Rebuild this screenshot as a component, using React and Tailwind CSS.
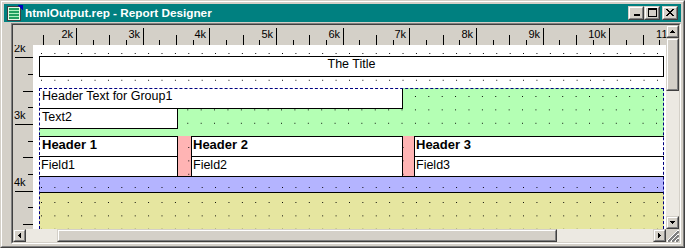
import React from "react";

function Pix({ rows, color = "#000" }) {
  const h = rows.length;
  const w = rows[0].length;
  const rects = [];
  rows.forEach((r, y) => {
    for (let x = 0; x < r.length; x++) {
      if (r[x] === "x") rects.push(<rect key={`${x}-${y}`} x={x} y={y} width="1" height="1" fill={color} />);
    }
  });
  return (
    <svg width={w} height={h} viewBox={`0 0 ${w} ${h}`} shapeRendering="crispEdges" className="block">
      {rects}
    </svg>
  );
}

function Bevel({ className, children }) {
  return (
    <div className={`border border-t-[#d4d0c8] border-l-[#d4d0c8] border-r-[#404040] border-b-[#404040] ${className}`}>
      <div className="w-full h-full border border-t-white border-l-white border-r-[#808080] border-b-[#808080] bg-[#d4d0c8] flex items-center justify-center">
        {children}
      </div>
    </div>
  );
}

function AppIcon() {
  return (
    <svg width="16" height="16" viewBox="0 0 16 16" shapeRendering="crispEdges" className="block">
      <rect x="0.5" y="1.5" width="13" height="14" fill="#e8f8e8" stroke="#404040" />
      <rect x="2" y="3" width="10" height="2" fill="#20a060" />
      <rect x="2" y="6" width="10" height="2" fill="#20a060" />
      <rect x="2" y="9" width="10" height="2" fill="#20a060" />
      <rect x="2" y="12" width="10" height="2" fill="#20a060" />
      <rect x="2" y="5" width="10" height="1" fill="#b0f0c0" />
      <rect x="2" y="8" width="10" height="1" fill="#b0f0c0" />
      <rect x="2" y="11" width="10" height="1" fill="#b0f0c0" />
      <polygon points="10,0 16,0 16,6" fill="#0000c0" />
    </svg>
  );
}

function HRuler() {
  const items = [];
  for (let k = -2; k < 40; k++) {
    const x = 43 + k * 16.667;
    if (x < 0 || x > 633) continue;
    const xi = Math.round(x) + 0.5;
    const t = ((k % 4) + 4) % 4;
    const y1 = t === 0 ? 3 : t === 2 ? 10 : 15;
    items.push(<line key={"t" + k} x1={xi} x2={xi} y1={y1} y2={20} stroke="#000" strokeWidth="1" />);
  }
  const labels = [];
  for (let j = 0; j < 10; j++) {
    const x = Math.round(43 + j * 66.667) - 3;
    labels.push(
      <text key={"l" + j} x={x} y={13} textAnchor="end" fontSize="11" fontFamily="'Liberation Sans', Arial, sans-serif" fill="#000">
        {`${j + 2}k`}
      </text>
    );
  }
  return (
    <svg width="633" height="20" viewBox="0 0 633 20" className="block">
      {items}
      {labels}
    </svg>
  );
}

function VRuler() {
  const items = [];
  for (let k = 0; k < 12; k++) {
    const y = 12.33 + k * 16.667;
    if (y > 184) continue;
    const yi = Math.round(y) + 0.5;
    const t = k % 4;
    const x1 = t === 0 ? 2 : t === 2 ? 10 : 15;
    items.push(<line key={"t" + k} x1={x1} x2={20} y1={yi} y2={yi} stroke="#000" strokeWidth="1" />);
  }
  const labels = [];
  for (let m = 0; m < 3; m++) {
    const y = Math.round(12.33 + m * 66.667) - 5;
    labels.push(
      <text key={"l" + m} x={1} y={y} fontSize="11" fontFamily="'Liberation Sans', Arial, sans-serif" fill="#000">
        {`${m + 2}k`}
      </text>
    );
  }
  return (
    <svg width="20" height="184" viewBox="0 0 20 184" className="block">
      {items}
      {labels}
    </svg>
  );
}

function SizeGrip() {
  return (
    <svg width="13" height="13" viewBox="0 0 13 13" className="block" shapeRendering="crispEdges">
      <line x1="12.5" y1="1" x2="1" y2="12.5" stroke="#ffffff" />
      <line x1="12.5" y1="2" x2="2" y2="12.5" stroke="#808080" />
      <line x1="12.5" y1="3" x2="3" y2="12.5" stroke="#808080" />
      <line x1="12.5" y1="5" x2="5" y2="12.5" stroke="#ffffff" />
      <line x1="12.5" y1="6" x2="6" y2="12.5" stroke="#808080" />
      <line x1="12.5" y1="7" x2="7" y2="12.5" stroke="#808080" />
      <line x1="12.5" y1="9" x2="9" y2="12.5" stroke="#ffffff" />
      <line x1="12.5" y1="10" x2="10" y2="12.5" stroke="#808080" />
      <line x1="12.5" y1="11" x2="11" y2="12.5" stroke="#808080" />
    </svg>
  );
}

const UP = ["..x..", ".xxx.", "xxxxx"];
const DOWN = ["xxxxx", ".xxx.", "..x.."];
const LEFT = ["..x", ".xx", "xxx", ".xx", "..x"];
const RIGHT = ["x..", "xx.", "xxx", "xx.", "x.."];
const MIN = ["xxxxxx", "xxxxxx"];
const MAX = ["xxxxxxxxx", "xxxxxxxxx", "x.......x", "x.......x", "x.......x", "x.......x", "x.......x", "x.......x", "xxxxxxxxx"];
const CLOSE = ["xx....xx", ".xx..xx.", "..xxxx..", "...xx...", "..xxxx..", ".xx..xx.", "xx....xx"];

export default function App() {
  return (
    <div className="w-[685px] h-[248px] overflow-hidden border border-t-[#d4d0c8] border-l-[#d4d0c8] border-r-[#404040] border-b-[#404040] bg-[#d4d0c8] font-['Liberation_Sans',Arial,sans-serif] text-black">
      <div className="w-full h-full border border-t-white border-l-white border-r-[#808080] border-b-[#808080] p-[2px] flex flex-col">
        {/* Title bar */}
        <div className="h-[18px] shrink-0 bg-[#008080] flex items-center pl-[3px] pr-[3px]">
          <AppIcon />
          <span className="ml-[2px] text-white font-bold text-[11.75px] leading-none whitespace-nowrap">htmlOutput.rep - Report Designer</span>
          <div className="ml-auto flex">
            <Bevel className="w-[16px] h-[14px]">
              <div className="w-full h-full flex items-end pl-[4px] pb-[2px]">
                <Pix rows={MIN} />
              </div>
            </Bevel>
            <Bevel className="w-[16px] h-[14px]">
              <div className="w-full h-full flex items-start pl-[2px]">
                <Pix rows={MAX} />
              </div>
            </Bevel>
            <Bevel className="w-[16px] h-[14px] ml-[2px]">
              <div className="w-full h-full flex items-start pl-[2px] pt-[1px]">
                <Pix rows={CLOSE} />
              </div>
            </Bevel>
          </div>
        </div>

        {/* Client area */}
        <div className="mt-px ml-[7px] h-[221px] border border-t-[#808080] border-l-[#808080] border-r-white border-b-white">
          <div className="w-full h-full border border-t-[#404040] border-l-[#404040] border-r-[#d4d0c8] border-b-[#d4d0c8] grid grid-cols-[20px_633px_13px] grid-rows-[20px_184px_13px]">
            {/* corner */}
            <div className="bg-[#d4d0c8]" />
            {/* horizontal ruler */}
            <div className="bg-[#d4d0c8] overflow-hidden">
              <HRuler />
            </div>
            {/* vertical scrollbar */}
            <div className="row-span-2 flex flex-col bg-[#ece9e2]">
              <Bevel className="w-[13px] h-[13px] shrink-0">
                <Pix rows={UP} />
              </Bevel>
              <Bevel className="w-[13px] h-[53px] shrink-0" />
              <div className="flex-1" />
              <Bevel className="w-[13px] h-[13px] shrink-0">
                <Pix rows={DOWN} />
              </Bevel>
            </div>
            {/* vertical ruler */}
            <div className="bg-[#d4d0c8] overflow-hidden">
              <VRuler />
            </div>
            {/* canvas */}
            <div className="bg-white overflow-hidden pl-[6px] flex flex-col">
              <div className="w-[625px] h-full flex flex-col">
                {/* page header */}
                <div className="h-[43px] shrink-0 pt-[11px] bg-black [background-image:linear-gradient(to_right,transparent_1px,#ffffff_1px),linear-gradient(to_bottom,transparent_1px,#ffffff_1px)] [background-size:13.4px_13.4px] [background-position:2px_8px]">
                  <div className="h-[21px] border border-black bg-white flex justify-center text-[12.5px] leading-[14px]">The Title</div>
                </div>
                {/* group */}
                <div className="relative flex-1 flex flex-col">
                  <div className="h-[48px] shrink-0 bg-black [background-image:linear-gradient(to_right,transparent_1px,#b4ffb4_1px),linear-gradient(to_bottom,transparent_1px,#b4ffb4_1px)] [background-size:13.4px_13.4px] [background-position:1px_8px]">
                    <div className="w-[364px] h-[21px] border-r border-b border-black bg-white pl-[3px] pt-px text-[12.5px] leading-[14px] whitespace-nowrap">Header Text for Group1</div>
                    <div className="w-[139px] h-[20px] border-r border-b border-black bg-white pl-[3px] pt-px text-[12.5px] leading-[14px]">Text2</div>
                  </div>
                  <div className="h-[40px] shrink-0 flex bg-black [background-image:linear-gradient(to_right,transparent_1px,#ffb4b4_1px),linear-gradient(to_bottom,transparent_1px,#ffb4b4_1px)] [background-size:13.4px_13.4px] [background-position:2px_11px]">
                    <div className="w-[139px] flex flex-col">
                      <div className="h-[21px] border-y border-r border-black bg-white pl-[3px] font-bold text-[13px] leading-[15px]">Header 1</div>
                      <div className="h-[19px] border-r border-black bg-white pl-[2px] pt-px text-[12.5px] leading-[14px]">Field1</div>
                    </div>
                    <div className="w-[13px]" />
                    <div className="w-[212px] flex flex-col">
                      <div className="h-[21px] border border-black bg-white pl-px font-bold text-[13px] leading-[15px]">Header 2</div>
                      <div className="h-[19px] border-x border-black bg-white pl-px pt-px text-[12.5px] leading-[14px]">Field2</div>
                    </div>
                    <div className="w-[11px]" />
                    <div className="flex-1 flex flex-col">
                      <div className="h-[21px] border-y border-l border-black bg-white pl-px font-bold text-[13px] leading-[15px]">Header 3</div>
                      <div className="h-[19px] border-l border-black bg-white pl-px pt-px text-[12.5px] leading-[14px]">Field3</div>
                    </div>
                  </div>
                  <div className="h-[17px] shrink-0 border-y border-black bg-black [background-image:linear-gradient(to_right,transparent_1px,#b4b4ff_1px),linear-gradient(to_bottom,transparent_1px,#b4b4ff_1px)] [background-size:13.4px_13.4px] [background-position:2px_10px]" />
                  <div className="flex-1 bg-black [background-image:linear-gradient(to_right,transparent_1px,#e6e6a0_1px),linear-gradient(to_bottom,transparent_1px,#e6e6a0_1px)] [background-size:13.4px_13.4px] [background-position:2px_9px]" />
                  <div className="absolute inset-0 border-t border-x border-dashed border-[#000080] pointer-events-none" />
                </div>
              </div>
            </div>
            {/* horizontal scrollbar */}
            <div className="col-span-2 flex bg-[#ece9e2]">
              <Bevel className="w-[13px] h-[13px] shrink-0">
                <Pix rows={LEFT} />
              </Bevel>
              <div className="w-[31px] shrink-0" />
              <Bevel className="w-[500px] h-[13px] shrink-0" />
              <div className="flex-1" />
              <Bevel className="w-[13px] h-[13px] shrink-0">
                <Pix rows={RIGHT} />
              </Bevel>
            </div>
            {/* size grip */}
            <div className="bg-[#d4d0c8]">
              <SizeGrip />
            </div>
          </div>
        </div>
      </div>
    </div>
  );
}
